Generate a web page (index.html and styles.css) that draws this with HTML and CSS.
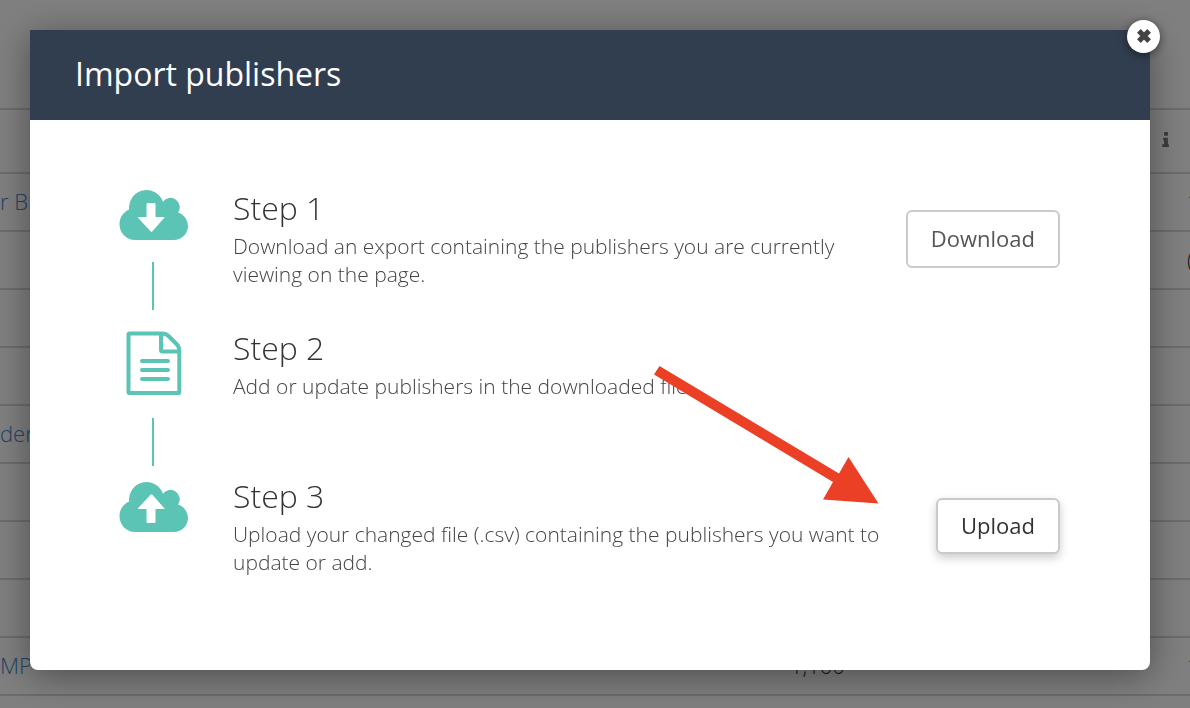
FILE: index.html
```html
<!DOCTYPE html>
<html lang="en">
<head>
    <meta charset="utf-8">
    <title>Import publishers</title>
    <link rel="stylesheet" href="styles.css">
</head>
<body>
    <main class="page">
        <table class="publishers">
            <colgroup>
                <col class="col-name">
                <col class="col-count">
                <col class="col-fill">
                <col class="col-info">
            </colgroup>
            <thead>
                <tr>
                    <th></th><th></th><th></th>
                    <th>
                        <svg class="info" viewBox="0 0 8 16" aria-hidden="true"><path d="M2 0h4v4H2zM1 6h5v7h1v3H0v-3h2V9H1z"/></svg>
                    </th>
                </tr>
            </thead>
            <tbody>
                <tr><td><a href="#">r Bl</a></td><td></td><td></td><td class="edge">1</td></tr>
                <tr><td></td><td></td><td></td><td class="edge">(</td></tr>
                <tr><td></td><td></td><td></td><td></td></tr>
                <tr><td></td><td></td><td></td><td></td></tr>
                <tr><td><a href="#">der</a></td><td></td><td></td><td></td></tr>
                <tr><td></td><td></td><td></td><td></td></tr>
                <tr><td></td><td></td><td></td><td></td></tr>
                <tr><td></td><td></td><td></td><td></td></tr>
                <tr><td><a href="#">MP</a></td><td class="count">1,100</td><td></td><td class="edge">1</td></tr>
            </tbody>
        </table>
    </main>

    <div class="overlay">
        <div class="modal" role="dialog" aria-labelledby="modal-title">
            <button class="close" type="button" aria-label="Close">
                <svg viewBox="0 0 14 14" aria-hidden="true"><path d="M3 3l8 8M11 3l-8 8"/></svg>
            </button>
            <header class="modal-header">
                <h1 id="modal-title">Import publishers</h1>
            </header>
            <div class="modal-body">
                <section class="step">
                    <div class="step-icon">
                        <svg class="cloud" viewBox="0 0 70 54" aria-hidden="true">
                            <path class="fill" d="M17 52C8.500 52 1.500 45 1.500 36c0-6.500 3.800-12 9.600-14.500A17.500 17.500 0 0 1 45 13.700 9 9 0 0 1 60 24.600 14 14 0 0 1 56 52z"/>
                            <path class="arrow-mark" d="M29.500 15h7q1 0 1 1v13h8.500q1 0 .3 .8L34.200 43.400q-.7 .8-1.400 0L20 29.800q-.6-.8 .4-.8h8.100V16q0-1 1-1z"/>
                        </svg>
                        <span class="line"></span>
                    </div>
                    <div class="step-text">
                        <h2>Step 1</h2>
                        <p>Download an export containing the publishers you are currently viewing on the page.</p>
                    </div>
                    <button class="btn btn-download" type="button">Download</button>
                </section>

                <section class="step">
                    <div class="step-icon">
                        <svg class="file" viewBox="0 0 70 70" aria-hidden="true">
                            <path d="M11.500 5.500H44q4 0 6.500 2.500l8 8q2.800 2.800 2.800 6.500V64q0 1-1 1H11.500q-1 0-1-1V6.500q0-1 1-1zM43 5.500V22q0 1.500 1.500 1.500H61M24 33h26M24 42h26M24 51h26"/>
                        </svg>
                        <span class="line"></span>
                    </div>
                    <div class="step-text">
                        <h2>Step 2</h2>
                        <p>Add or update publishers in the downloaded file.</p>
                    </div>
                </section>

                <section class="step">
                    <div class="step-icon step-icon-last">
                        <svg class="cloud" viewBox="0 0 70 54" aria-hidden="true">
                            <path class="fill" d="M17 52C8.500 52 1.500 45 1.500 36c0-6.500 3.800-12 9.600-14.500A17.500 17.500 0 0 1 45 13.700 9 9 0 0 1 60 24.600 14 14 0 0 1 56 52z"/>
                            <path class="arrow-mark" d="M29.500 43h7q1 0 1-1V29h8.500q1 0 .3-.8L34.200 14.600q-.7-.8-1.400 0L20 28.200q-.6 .8 .4 .8h8.100v13q0 1 1 1z"/>
                        </svg>
                    </div>
                    <div class="step-text">
                        <h2>Step 3</h2>
                        <p>Upload your changed file (.csv) containing the publishers you want to update or add.</p>
                    </div>
                    <button class="btn btn-upload" type="button">Upload</button>
                </section>
            </div>
            <svg class="pointer" viewBox="0 0 232 150" aria-hidden="true">
                <path d="M9.500 6 L189 113.500 L198.500 97 L228.500 143.500 L173 139.500 L183 122 L4 14.500z"/>
            </svg>
        </div>
    </div>
</body>
</html>
```

FILE: styles.css
```css
* { box-sizing: border-box; }
body { margin: 0; height: 100vh; overflow: hidden; background: #fff; color: #333; font-family: "Open Sans", "Noto Sans", sans-serif; }
h1, h2, p { margin: 0; }

/* table behind the dialog */
.page { padding-top: 108px; }
.publishers { width: 100%; table-layout: fixed; border-collapse: separate; border-spacing: 0; font-size: 22px; font-weight: 300; }
.publishers th, .publishers td { padding: 0 0 2px; border-top: 2px solid #d8d8d8; text-align: left; white-space: nowrap; overflow: hidden; }
.publishers th { height: 64px; padding-bottom: 4px; }
.publishers td { height: 58px; }
.publishers tr:last-child td { height: 60px; border-bottom: 2px solid #d8d8d8; }
.publishers thead tr:last-child th { border-bottom: none; }
.publishers a { color: #4088c8; text-decoration: none; }
.publishers .count { text-align: right; }
.publishers .edge { padding-left: 25px; }
.col-name { width: 20%; }
.col-count { width: 51%; }
.col-info { width: 28px; }
.info { display: block; width: 8px; height: 15px; fill: #777; }

.overlay { position: fixed; inset: 0; padding: 30px 40px 38px 30px; background: rgba(0, 0, 0, 0.5); }

.modal { position: relative; border-radius: 0 0 8px 8px; background: #fff; box-shadow: 0 6px 36px rgba(0, 0, 0, 0.4); }
.modal-header { padding: 19px 45px 21px; background: #313e50; color: #fff; }
.modal-header h1 { font-size: 32px; line-height: 50px; font-weight: 400; }
.modal-body { display: flex; flex-direction: column; gap: 10px; padding: 68px 90px 94px 88px; }

.close { position: absolute; top: -10px; right: -10px; display: flex; align-items: center; justify-content: center; width: 33px; height: 33px; padding: 0 0 2px; border: none; border-radius: 50%; background: #fff; box-shadow: 0 2px 10px rgba(0, 0, 0, 0.5); cursor: pointer; }
.close svg { width: 18px; height: 18px; fill: none; stroke: #444; stroke-width: 4; }

/* steps */
.step { display: flex; align-items: flex-start; }
.step:first-child { min-height: 130px; }
.step-icon { display: flex; flex-direction: column; align-items: center; gap: 20px; width: 70px; margin-right: 45px; flex: none; }
.step-icon-last { padding-top: 4px; }
.step-icon svg { width: 70px; }
.fill { fill: #5bc4b5; }
.arrow-mark { fill: #fff; }
.file { fill: none; stroke: #5bc4b5; stroke-width: 4; stroke-linecap: round; stroke-linejoin: round; }
.line { width: 2px; height: 48px; background: #5bc4b5; }
.step-text { max-width: 650px; }
.step-text h2 { margin-bottom: 4px; font-size: 32px; line-height: 40px; font-weight: 300; }
.step-text p { color: #444; font-size: 21px; line-height: 28px; font-weight: 300; }

.btn { flex: none; margin: 22px 0 0 auto; padding: 0 23px 3px; border: 2px solid #c6cbd0; border-radius: 6px; background: #fff; color: #555; font-family: inherit; font-size: 22px; cursor: pointer; }
.btn-download { height: 58px; }
.btn-upload { height: 56px; color: #333; box-shadow: 0 4px 10px rgba(0, 0, 0, 0.2); }

.pointer { position: absolute; top: 330px; left: 620px; width: 232px; height: 150px; fill: #eb4026; pointer-events: none; }
```
